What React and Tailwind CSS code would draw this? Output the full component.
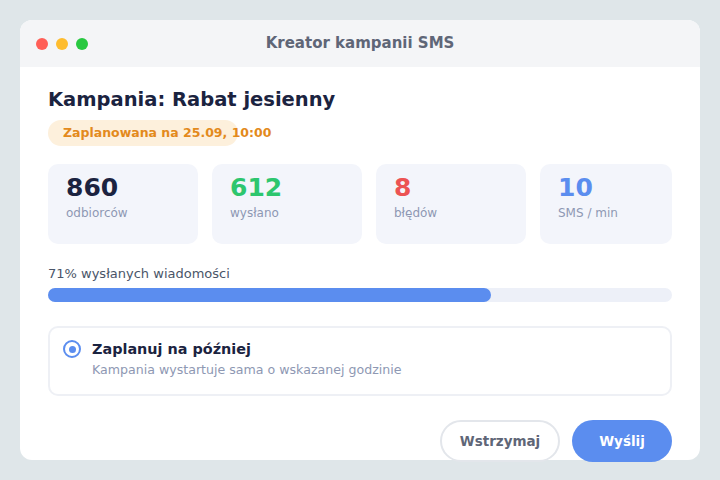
import React from 'react';

const STATS = [
  { value: '860', label: 'odbiorców', color: 'text-[#1b2340]', width: 'w-[150px]' },
  { value: '612', label: 'wysłano', color: 'text-[#2dc66e]', width: 'w-[150px]' },
  { value: '8', label: 'błędów', color: 'text-[#ec5353]', width: 'w-[150px]' },
  { value: '10', label: 'SMS / min', color: 'text-[#5b8def]', width: 'flex-1' },
];

export default function App() {
  const progress = 71;

  return (
    <div className="w-[720px] h-[480px] bg-[#dfe6e9] p-5 font-['DejaVu_Sans',sans-serif]">
      <div className="h-[440px] bg-white rounded-xl flex flex-col">
        {/* Title bar */}
        <div className="h-[47px] bg-[#f4f5f7] rounded-t-xl flex items-center px-4 relative flex-shrink-0">
          <div className="flex gap-2">
            <div className="w-3 h-3 rounded-full bg-[#ff5f57]" />
            <div className="w-3 h-3 rounded-full bg-[#febc2e]" />
            <div className="w-3 h-3 rounded-full bg-[#28c840]" />
          </div>
          <span className="absolute inset-x-0 text-center text-[15px] font-bold text-[#5f6677] pointer-events-none">
            Kreator kampanii SMS
          </span>
        </div>

        <div className="px-7 pt-[20px] flex flex-col">
          <h1 className="text-[19.5px] font-bold text-[#1b2340] leading-[26px]">Kampania: Rabat jesienny</h1>
          <div className="mt-[7px] w-[190px] h-[26px] rounded-full bg-[#fdf0dc] flex items-center pl-[15px] whitespace-nowrap">
            <span className="text-[12.5px] font-bold text-[#e38a1c]">Zaplanowana na 25.09, 10:00</span>
          </div>

          {/* Stats */}
          <div className="flex gap-[14px] mt-[18px]">
            {STATS.map((s) => (
              <div key={s.label} className={`${s.width} h-[80px] rounded-[10px] bg-[#f3f5fb] px-[18px] pt-[10px]`}>
                <div className={`text-[25px] font-bold leading-[28px] ${s.color}`}>{s.value}</div>
                <div className="text-[12px] text-[#8e98b3] mt-[2px]">{s.label}</div>
              </div>
            ))}
          </div>

          {/* Progress */}
          <div className="mt-[20px] text-[13px] text-[#4a5568] leading-[20px]">{progress}% wysłanych wiadomości</div>
          <div className="mt-[4px] h-[14px] rounded-full bg-[#edf0f8]">
            <div className="h-full rounded-full bg-[#5b8def]" style={{ width: `${progress}%` }} />
          </div>

          {/* Option */}
          <div className="mt-[24px] h-[70px] rounded-[10px] border-2 border-[#eef0f5] flex items-start pl-[13px] pr-[14px] pt-[12px] gap-[11px]">
            <div className="w-[18px] h-[18px] rounded-full border-2 border-[#5b8def] flex items-center justify-center flex-shrink-0">
              <div className="w-[7px] h-[7px] rounded-full bg-[#5b8def]" />
            </div>
            <div className="flex flex-col -mt-[1px]">
              <span className="text-[14.4px] font-bold text-[#1b2340] leading-[20px]">Zaplanuj na później</span>
              <span className="text-[12.6px] text-[#8e98b3] leading-[20px] mt-[1px]">Kampania wystartuje sama o wskazanej godzinie</span>
            </div>
          </div>

          {/* Actions */}
          <div className="flex justify-end gap-3 mt-[24px]">
            <button className="w-[120px] h-[42px] rounded-full border-2 border-[#e3e6eb] bg-white text-[13.5px] font-bold text-[#5f6677]">
              Wstrzymaj
            </button>
            <button className="w-[100px] h-[42px] rounded-full bg-[#5b8def] text-[13.5px] font-bold text-white">
              Wyślij
            </button>
          </div>
        </div>
      </div>
    </div>
  );
}
